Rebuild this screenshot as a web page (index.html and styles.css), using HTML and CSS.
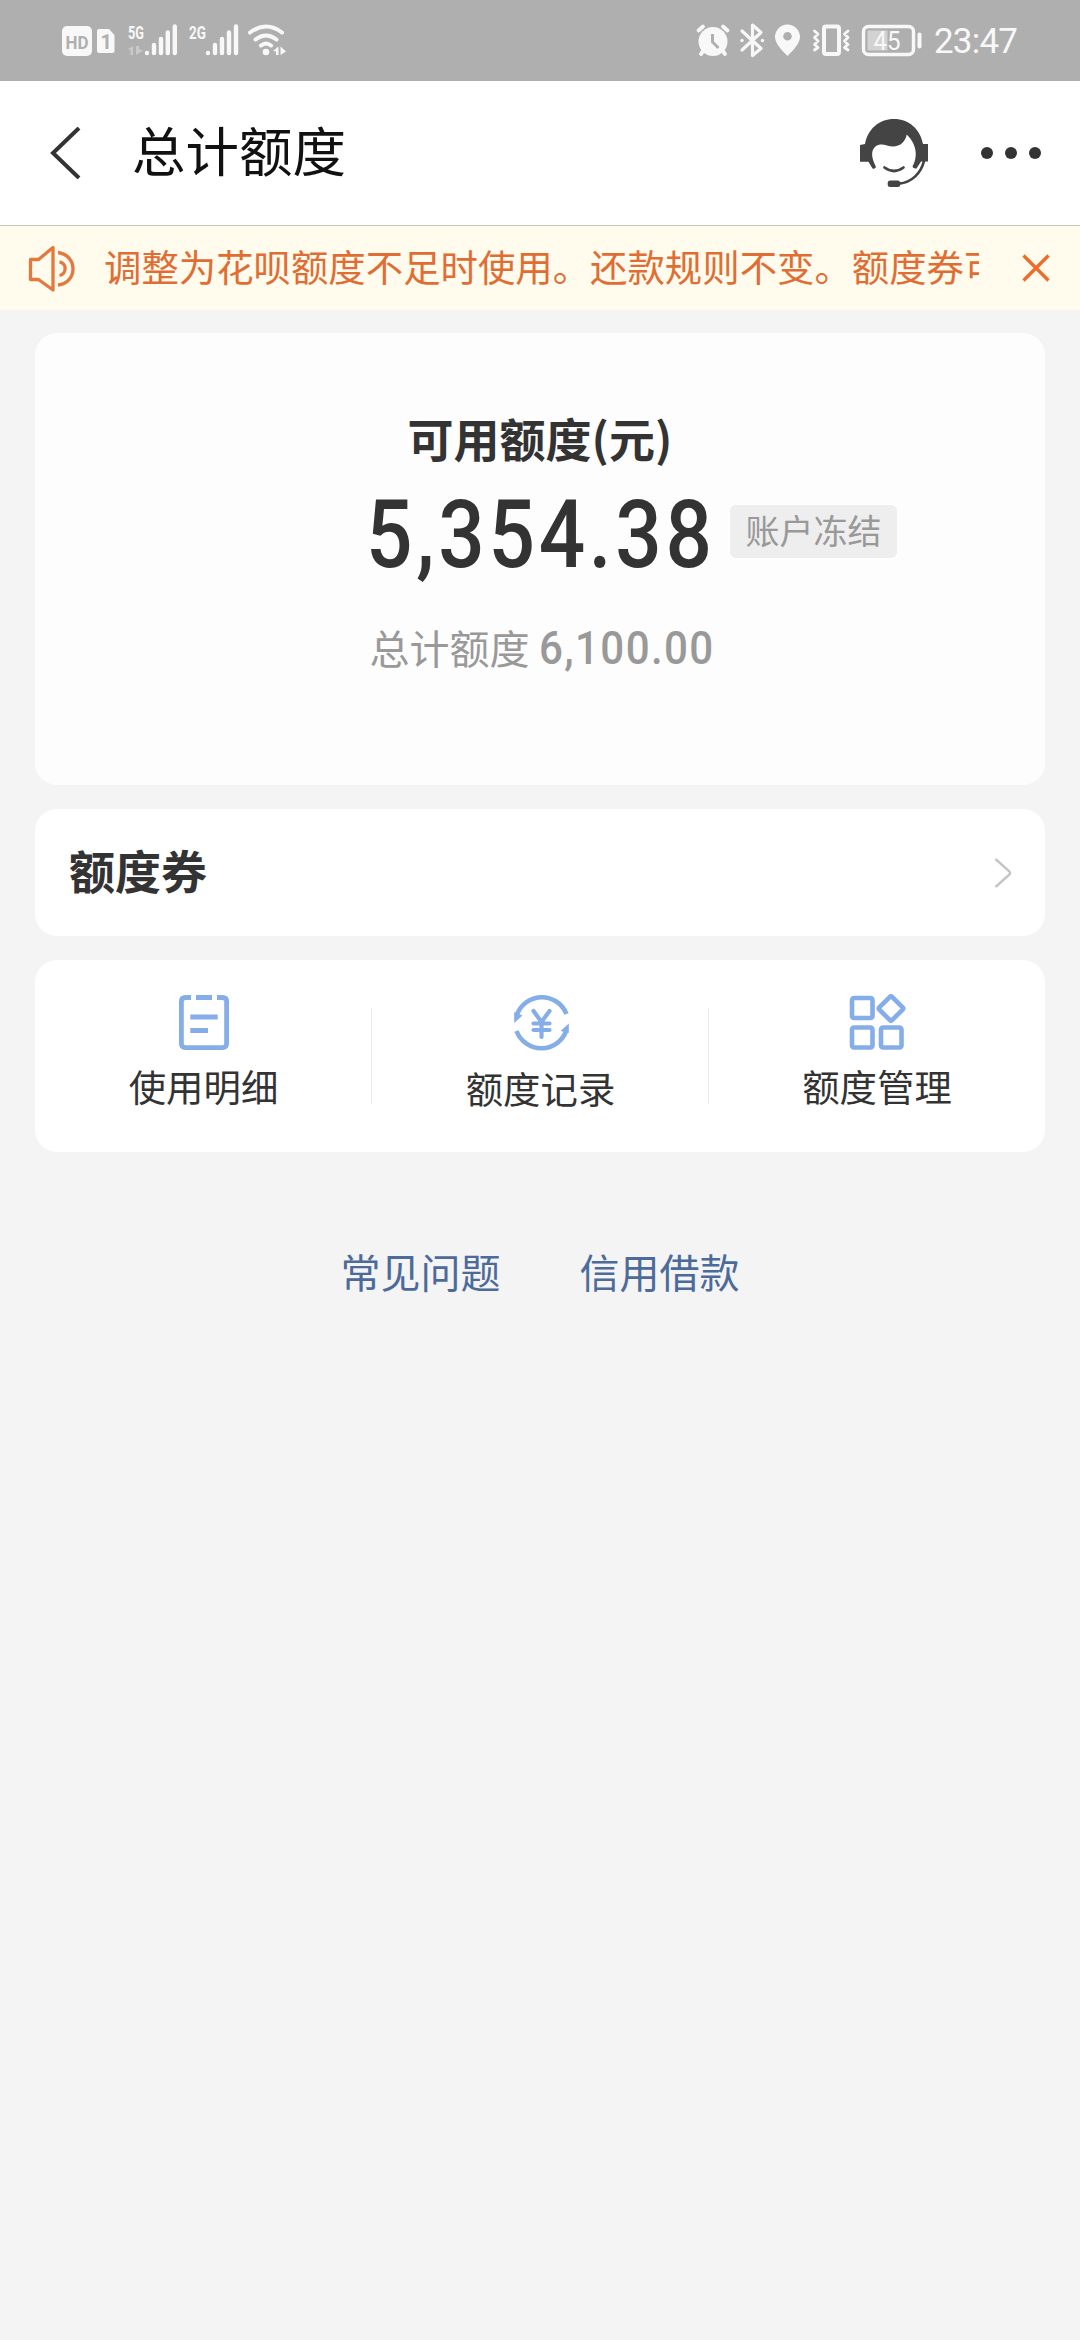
FILE: index.html
```html
<!DOCTYPE html>
<html lang="zh-CN">
<head>
<meta charset="utf-8">
<title>总计额度</title>
<link rel="stylesheet" href="styles.css">
</head>
<body>
<div class="status">
  <svg class="status-left" viewBox="60 20 230 42" fill="#f8f8f8">
    <rect x="62" y="26" width="30" height="30" rx="5"/>
    <text x="65.6" y="48.500" class="hd" textLength="23" lengthAdjust="spacingAndGlyphs">HD</text>
    <path d="M99 29H109L114.500 35V51Q114.500 53 112.500 53H99Q97 53 97 51V31Q97 29 99 29Z"/>
    <text x="100.500" y="48.500" class="sim">1</text>
    <text x="128" y="38.500" class="net" textLength="16" lengthAdjust="spacingAndGlyphs">5G</text>
    <g opacity=".35"><path d="M128 49L133 46V55H130.500V50ZM136 46V55L143 50.500L139 49V46Z"/></g>
    <g stroke="#f8f8f8" stroke-width="4.400" stroke-linecap="round">
      <path d="M147 53V53M154 45V53M161 39V53M167.800 32.500V53M174.800 26.500V53"/>
      <path d="M208 53V53M215 45V53M222 39V53M229 32.500V53M236 26.500V53"/>
    </g>
    <text x="189" y="38.500" class="net" textLength="17" lengthAdjust="spacingAndGlyphs">2G</text>
    <g fill="none" stroke="#f8f8f8" stroke-width="4" stroke-linecap="round">
      <path d="M250 32.500Q266 20.500 282 32.500M255.500 39.500Q266 31.500 276.500 39.500M261 45.500Q266 41.500 271 45.500"/>
    </g>
    <circle cx="266" cy="52" r="3.300"/>
    <path d="M273 51L278.500 46.500V55H276V51.500ZM280.500 46.500L286 51.500L280.500 55Z"/>
  </svg>
  <svg class="status-right" viewBox="694 20 232 42" fill="#f8f8f8">
    <circle cx="713" cy="41.500" r="14.500"/>
    <path d="M698.500 30.500L703 26.500M727.500 30.500L723 26.500M704 50L701 54M722 50L725 54" stroke="#f8f8f8" stroke-width="3.800" stroke-linecap="round"/>
    <path d="M712.500 34V42L718.500 48" fill="none" stroke="#afafaf" stroke-width="3"/>
    <path d="M742 31L761 48.500L752.500 55.500V25L761 32.500L742 50" fill="none" stroke="#f8f8f8" stroke-width="3.200" stroke-linejoin="round" stroke-linecap="round"/>
    <circle cx="742" cy="40.500" r="1.700"/><circle cx="762.500" cy="40.500" r="1.700"/>
    <path fill-rule="evenodd" d="M787.500 56C781 49.500 775 43 775 37A12.500 12.500 0 0 1 800 37C800 43 794 49.500 787.500 56ZM787.500 32A4.300 4.300 0 1 0 787.500 40.600A4.300 4.300 0 1 0 787.500 32Z"/>
    <g fill="none" stroke="#f8f8f8" stroke-linejoin="round" stroke-linecap="round">
      <rect x="824" y="26.500" width="15" height="27.500" rx="2" stroke-width="4"/>
      <path d="M814.500 31L818 34L814.500 37.500L818 41L814.500 44.500L818 47.500L814.500 50M848 31L844.500 34L848 37.500L844.500 41L848 44.500L844.500 47.500L848 50" stroke-width="2.800"/>
      <rect x="863.500" y="26.500" width="50" height="28" rx="5" stroke-width="3.400"/>
      <path d="M919.500 34.500V46.500" stroke-width="4"/>
    </g>
    <rect x="867.500" y="30.500" width="20" height="20" fill="#d2d2d2"/>
    <text x="873.500" y="50" class="batt" textLength="27" lengthAdjust="spacingAndGlyphs">45</text>
  </svg>
  <span class="clock">23:47</span>
</div>

<header class="nav">
  <svg class="back" viewBox="0 0 32 52"><path d="M29 1L3 26L29 51" fill="none" stroke="#333" stroke-width="4"/></svg>
  <h1 class="title">总计额度</h1>
  <svg class="service" viewBox="0 0 68 68">
    <g fill="#444">
      <path d="M5 25C8 10 19 0 34 0S60 10 63 25H68V42.500H61L56.500 49.500Q53 50 52.500 47.500C57 40 58.500 27 46.700 15.500C45 25 37 29.500 27 26.500C20 24 14 26 12.300 33C11.500 39 14 43 16 48Q15 50.500 12.500 49.500L8.500 42.700H0V26Z"/>
      <rect x="27.700" y="61.500" width="12.500" height="6.500" rx="2.500"/>
    </g>
    <path d="M64 42C61 54 52 63.500 39 64.600M24.500 48.500Q34 55.500 43.500 48.500" fill="none" stroke="#444" stroke-width="2.700" stroke-linecap="round"/>
  </svg>
  <svg class="more" viewBox="0 0 60 12" fill="#333"><circle cx="6" cy="6" r="6"/><circle cx="30" cy="6" r="6"/><circle cx="54" cy="6" r="6"/></svg>
</header>

<div class="notice">
  <svg class="horn" viewBox="28 246 48 48" fill="none" stroke="#e5783d" stroke-width="3.300" stroke-linejoin="round">
    <path d="M30.500 260.500H38.500L53 248.500V291L38.500 280.500H30.500ZM58 253.500C78 256 78 284 58 286M59.500 263C67 264 67 275 59.500 276.500"/>
  </svg>
  <p class="notice-text">调整为花呗额度不足时使用。还款规则不变。额度券可</p>
  <svg class="close" viewBox="0 0 28 28"><path d="M1.500 1.500L26.500 26.500M26.500 1.500L1.500 26.500" stroke="#ef6c28" stroke-width="3.300"/></svg>
</div>

<main class="content">
  <section class="card quota">
    <h2 class="quota-label">可用额度(元)</h2>
    <div class="amount-row">
      <span></span>
      <strong class="amount">5,354.38</strong>
      <span class="tag">账户冻结</span>
    </div>
    <p class="total">总计额度<span class="total-num">6,100.00</span></p>
  </section>

  <section class="card coupon">
    <h2 class="coupon-title">额度券</h2>
    <svg class="chev" viewBox="0 0 18 32"><path d="M1.500 2L15 14Q17 16 15 18L1.500 30" fill="none" stroke="#c4c4c4" stroke-width="2.400"/></svg>
  </section>

  <nav class="card actions">
    <a class="action">
      <svg class="action-icon" viewBox="174 994 58 58" fill="none" stroke="#85aee9" stroke-width="4.800">
        <path d="M190 997.500H184.500Q180.400 997.500 180.400 1001.500V1043.500Q180.400 1047.600 184.500 1047.600H221.500Q225.600 1047.600 225.600 1043.500V1001.500Q225.600 997.500 221.500 997.500H216M195 997.500H211M189.300 1017H216.700M189.300 1030.500H207"/>
      </svg>
      <span>使用明细</span>
    </a>
    <a class="action middle">
      <svg class="action-icon" viewBox="511 994 58 58" fill="none" stroke="#85aee9">
        <path d="M515.500 1016A26.500 26.500 0 0 1 565.500 1014M515.500 1031A26.500 26.500 0 0 0 565.500 1030" stroke-width="4.600"/>
        <path d="M513.200 1023V1012L521.500 1015.500ZM567.800 1023.500V1033L559.500 1031Z" fill="#85aee9" stroke="none"/>
        <path d="M532.500 1011L540.500 1022L548.500 1011M540.500 1022V1037M532.500 1023.500H548.500M532.500 1030H548.500" stroke-width="4.200" stroke-linecap="round"/>
      </svg>
      <span>额度记录</span>
    </a>
    <a class="action">
      <svg class="action-icon" viewBox="848 994 58 58" fill="none" stroke="#85aee9" stroke-width="4.600" stroke-linejoin="round">
        <rect x="852" y="998" width="20.500" height="20" rx="2"/>
        <rect x="852" y="1027.500" width="20.500" height="20" rx="2"/>
        <rect x="881" y="1027.500" width="20.500" height="20" rx="2"/>
        <rect x="882" y="999.500" width="18" height="18" rx="1.500" transform="rotate(45 891 1008.500)"/>
      </svg>
      <span>额度管理</span>
    </a>
  </nav>

  <div class="links"><a>常见问题</a><a>信用借款</a></div>
</main>
</body>
</html>
```
FILE: styles.css
```css
* { box-sizing: border-box; margin: 0; padding: 0; }

body {
  width: 1080px;
  min-height: 2340px;
  background: #f4f4f4;
  color: #333;
  font-family: "Noto Sans CJK SC", sans-serif;
}

svg { display: block; flex: none; }

.status {
  height: 81px;
  padding: 20px 63px 19px 60px;
  display: flex;
  background: #afafaf;
}
.status-left { width: 230px; height: 42px; }
.status-right { width: 232px; height: 42px; margin-left: auto; }
.clock {
  width: 83px;
  margin-left: 8px;
  font: 400 35px/43px Roboto, sans-serif;
  letter-spacing: -0.8px;
  color: #f8f8f8;
  white-space: nowrap;
}
.hd { font: 700 19px Roboto, sans-serif; fill: #afafaf; }
.sim { font: 700 20px Roboto, sans-serif; fill: #afafaf; }
.net { font: 700 18.5px Roboto, sans-serif; }
.batt { font: 400 26px Roboto, sans-serif; }

.nav {
  height: 145px;
  padding: 0 39px 0 50px;
  display: flex;
  align-items: center;
  background: #fff;
  border-bottom: 1px solid #ccc5bd;
}
.back { width: 32px; height: 52px; }
.title {
  margin: -8px auto 0 50px;
  font-size: 53.500px;
  font-weight: 400;
  line-height: 72px;
  color: #111;
}
.service { width: 68px; height: 68px; }
.more { width: 60px; height: 12px; margin-left: 53px; }

.notice {
  height: 84px;
  padding: 0 30px 0 28px;
  display: flex;
  align-items: center;
  background: #fffbed;
}
.horn { width: 48px; height: 48px; margin-top: 2px; }
.notice-text {
  width: 875px;
  margin: -4px auto 0 28px;
  overflow: hidden;
  white-space: nowrap;
  font-size: 37.400px;
  line-height: 56px;
  color: #e06d33;
}
.close { width: 28px; height: 28px; }

.content {
  padding: 23px 35px 0;
  display: flex;
  flex-direction: column;
  gap: 24px;
}
.card { background: #fff; border-radius: 22px; }

.quota {
  height: 452px;
  padding-top: 71px;
  background: #fdfdfd;
  text-align: center;
}
.quota-label { font-size: 46px; font-weight: 700; line-height: 66px; }
.amount-row {
  height: 112px;
  margin-top: 9px;
  display: grid;
  grid-template-columns: 1fr 340px 1fr;
  column-gap: 20px;
  align-items: center;
}
.amount {
  justify-self: center;
  font: 500 94px/112px Roboto, sans-serif;
  letter-spacing: 4.300px;
  text-indent: 3px;
  transform: scaleX(.87);
}
.tag {
  justify-self: start;
  width: 167px;
  height: 53px;
  margin-top: -8px;
  border-radius: 6px;
  background: #eee;
  color: #999;
  font-size: 34px;
  line-height: 49px;
}
.total {
  margin-top: 26px;
  display: flex;
  justify-content: center;
  align-items: baseline;
  gap: 9px;
  font-size: 40px;
  line-height: 60px;
  color: #999;
}
.total-num {
  width: 172px;
  font: 500 46px/60px Roboto, sans-serif;
  letter-spacing: 1.500px;
  white-space: nowrap;
  text-align: left;
  transform: scaleX(.915);
  transform-origin: left;
}

.coupon {
  height: 127px;
  padding: 0 33px 0 34px;
  display: flex;
  align-items: center;
  justify-content: space-between;
}
.coupon-title { margin-top: -8px; font-size: 46px; line-height: 66px; }
.chev { width: 18px; height: 32px; }

.actions {
  height: 192px;
  display: grid;
  grid-template-columns: 337px 337px 336px;
}
.action {
  padding-top: 34px;
  display: flex;
  flex-direction: column;
  align-items: center;
  font-size: 37.400px;
  line-height: 56px;
  background: linear-gradient(#ececec, #ececec) right 48px / 1px 96px no-repeat;
}
.action:last-child { background: none; }
.action span { margin-top: 6px; }
.action-icon { width: 58px; height: 58px; }
.action.middle span { margin-top: 8px; }

.links {
  margin-top: 65px;
  display: flex;
  justify-content: center;
  gap: 79px;
  font-size: 40px;
  line-height: 60px;
  color: #4c6b9a;
}
```
